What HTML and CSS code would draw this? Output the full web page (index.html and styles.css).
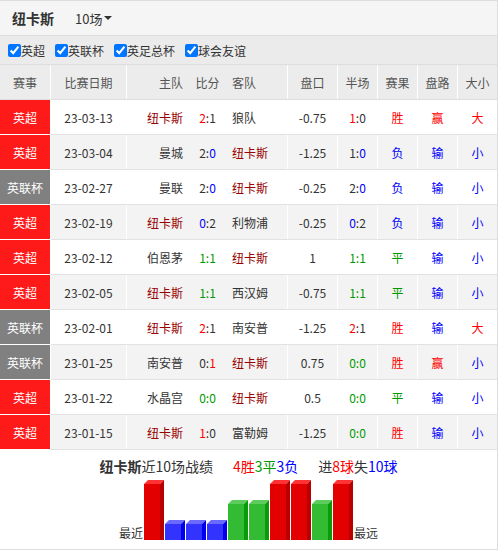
FILE: index.html
```html
<!DOCTYPE html>
<html lang="zh">
<head>
<meta charset="utf-8">
<link rel="stylesheet" href="styles.css">
</head>
<body>
<div class="panel">
  <div class="topbar">
    <span class="team-title">纽卡斯</span>
    <span class="count">10场<i class="caret"></i></span>
  </div>
  <div class="filters">
    <label><input type="checkbox" checked>英超</label>
    <label><input type="checkbox" checked>英联杯</label>
    <label><input type="checkbox" checked>英足总杯</label>
    <label><input type="checkbox" checked>球会友谊</label>
  </div>
  <div class="table">
    <div class="row head">
      <div class="c lg">赛事</div>
      <div class="c dt">比赛日期</div>
      <div class="c home">主队</div>
      <div class="c score">比分</div>
      <div class="c away">客队</div>
      <div class="c hc">盘口</div>
      <div class="c ht">半场</div>
      <div class="c res">赛果</div>
      <div class="c pl">盘路</div>
      <div class="c ou">大小</div>
    </div>
    <div class="row">
      <div class="c lg epl">英超</div><div class="c dt">23-03-13</div>
      <div class="c home nc">纽卡斯</div><div class="c score"><span class="r">2</span>:1</div><div class="c away">狼队</div>
      <div class="c hc">-0.75</div><div class="c ht"><span class="r">1</span>:0</div>
      <div class="c res r">胜</div><div class="c pl r">赢</div><div class="c ou r">大</div>
    </div>
    <div class="row alt">
      <div class="c lg epl">英超</div><div class="c dt">23-03-04</div>
      <div class="c home">曼城</div><div class="c score">2:<span class="b">0</span></div><div class="c away nc">纽卡斯</div>
      <div class="c hc">-1.25</div><div class="c ht">1:<span class="b">0</span></div>
      <div class="c res b">负</div><div class="c pl b">输</div><div class="c ou b">小</div>
    </div>
    <div class="row">
      <div class="c lg cup">英联杯</div><div class="c dt">23-02-27</div>
      <div class="c home">曼联</div><div class="c score">2:<span class="b">0</span></div><div class="c away nc">纽卡斯</div>
      <div class="c hc">-0.25</div><div class="c ht">2:<span class="b">0</span></div>
      <div class="c res b">负</div><div class="c pl b">输</div><div class="c ou b">小</div>
    </div>
    <div class="row alt">
      <div class="c lg epl">英超</div><div class="c dt">23-02-19</div>
      <div class="c home nc">纽卡斯</div><div class="c score"><span class="b">0</span>:2</div><div class="c away">利物浦</div>
      <div class="c hc">-0.25</div><div class="c ht"><span class="b">0</span>:2</div>
      <div class="c res b">负</div><div class="c pl b">输</div><div class="c ou b">小</div>
    </div>
    <div class="row">
      <div class="c lg epl">英超</div><div class="c dt">23-02-12</div>
      <div class="c home">伯恩茅</div><div class="c score g">1:1</div><div class="c away nc">纽卡斯</div>
      <div class="c hc">1</div><div class="c ht g">1:1</div>
      <div class="c res g">平</div><div class="c pl b">输</div><div class="c ou b">小</div>
    </div>
    <div class="row alt">
      <div class="c lg epl">英超</div><div class="c dt">23-02-05</div>
      <div class="c home nc">纽卡斯</div><div class="c score g">1:1</div><div class="c away">西汉姆</div>
      <div class="c hc">-0.75</div><div class="c ht g">1:1</div>
      <div class="c res g">平</div><div class="c pl b">输</div><div class="c ou b">小</div>
    </div>
    <div class="row">
      <div class="c lg cup">英联杯</div><div class="c dt">23-02-01</div>
      <div class="c home nc">纽卡斯</div><div class="c score"><span class="r">2</span>:1</div><div class="c away">南安普</div>
      <div class="c hc">-1.25</div><div class="c ht"><span class="r">2</span>:1</div>
      <div class="c res r">胜</div><div class="c pl b">输</div><div class="c ou r">大</div>
    </div>
    <div class="row alt">
      <div class="c lg cup">英联杯</div><div class="c dt">23-01-25</div>
      <div class="c home">南安普</div><div class="c score">0:<span class="r">1</span></div><div class="c away nc">纽卡斯</div>
      <div class="c hc">0.75</div><div class="c ht g">0:0</div>
      <div class="c res r">胜</div><div class="c pl r">赢</div><div class="c ou b">小</div>
    </div>
    <div class="row">
      <div class="c lg epl">英超</div><div class="c dt">23-01-22</div>
      <div class="c home">水晶宫</div><div class="c score g">0:0</div><div class="c away nc">纽卡斯</div>
      <div class="c hc">0.5</div><div class="c ht g">0:0</div>
      <div class="c res g">平</div><div class="c pl b">输</div><div class="c ou b">小</div>
    </div>
    <div class="row alt">
      <div class="c lg epl">英超</div><div class="c dt">23-01-15</div>
      <div class="c home nc">纽卡斯</div><div class="c score"><span class="r">1</span>:0</div><div class="c away">富勒姆</div>
      <div class="c hc">-1.25</div><div class="c ht g">0:0</div>
      <div class="c res r">胜</div><div class="c pl b">输</div><div class="c ou b">小</div>
    </div>
  </div>
  <div class="chart">
    <div class="summary">
      <span><b>纽卡斯</b>近10场战绩</span>
      <span><span class="r">4胜</span><span class="g">3平</span><span class="b">3负</span></span>
      <span>进<span class="r">8球</span>失<span class="b">10球</span></span>
    </div>
    <div class="bars">
      <span class="edge">最近</span>
      <svg class="bar win" width="20" height="60" viewBox="0 0 20 60"><polygon class="tp" points="0,4 4,0 20,0 16,4"/><polygon class="sd" points="16,4 20,0 20,60 16,60"/><rect class="fr" x="0" y="4" width="16" height="56"/></svg>
      <svg class="bar loss" width="20" height="20" viewBox="0 0 20 20"><polygon class="tp" points="0,4 4,0 20,0 16,4"/><polygon class="sd" points="16,4 20,0 20,20 16,20"/><rect class="fr" x="0" y="4" width="16" height="16"/></svg>
      <svg class="bar loss" width="20" height="20" viewBox="0 0 20 20"><polygon class="tp" points="0,4 4,0 20,0 16,4"/><polygon class="sd" points="16,4 20,0 20,20 16,20"/><rect class="fr" x="0" y="4" width="16" height="16"/></svg>
      <svg class="bar loss" width="20" height="20" viewBox="0 0 20 20"><polygon class="tp" points="0,4 4,0 20,0 16,4"/><polygon class="sd" points="16,4 20,0 20,20 16,20"/><rect class="fr" x="0" y="4" width="16" height="16"/></svg>
      <svg class="bar draw" width="20" height="40" viewBox="0 0 20 40"><polygon class="tp" points="0,4 4,0 20,0 16,4"/><polygon class="sd" points="16,4 20,0 20,40 16,40"/><rect class="fr" x="0" y="4" width="16" height="36"/></svg>
      <svg class="bar draw" width="20" height="40" viewBox="0 0 20 40"><polygon class="tp" points="0,4 4,0 20,0 16,4"/><polygon class="sd" points="16,4 20,0 20,40 16,40"/><rect class="fr" x="0" y="4" width="16" height="36"/></svg>
      <svg class="bar win" width="20" height="60" viewBox="0 0 20 60"><polygon class="tp" points="0,4 4,0 20,0 16,4"/><polygon class="sd" points="16,4 20,0 20,60 16,60"/><rect class="fr" x="0" y="4" width="16" height="56"/></svg>
      <svg class="bar win" width="20" height="60" viewBox="0 0 20 60"><polygon class="tp" points="0,4 4,0 20,0 16,4"/><polygon class="sd" points="16,4 20,0 20,60 16,60"/><rect class="fr" x="0" y="4" width="16" height="56"/></svg>
      <svg class="bar draw" width="20" height="40" viewBox="0 0 20 40"><polygon class="tp" points="0,4 4,0 20,0 16,4"/><polygon class="sd" points="16,4 20,0 20,40 16,40"/><rect class="fr" x="0" y="4" width="16" height="36"/></svg>
      <svg class="bar win" width="20" height="60" viewBox="0 0 20 60"><polygon class="tp" points="0,4 4,0 20,0 16,4"/><polygon class="sd" points="16,4 20,0 20,60 16,60"/><rect class="fr" x="0" y="4" width="16" height="56"/></svg>
      <span class="edge">最远</span>
    </div>
  </div>
</div>
</body>
</html>
```
FILE: styles.css
```css
* { box-sizing: border-box; }
html, body { margin: 0; padding: 0; background: #fff; }
body {
  font-family: "Noto Sans CJK SC", "Noto Sans", sans-serif;
  font-size: 12px;
  color: #333;
}
.panel {
  width: 498px;
  height: 550px;
  border-top: 1px solid #ddd;
  border-right: 1px solid #ddd;
  border-bottom: 1px solid #ddd;
}
.topbar {
  height: 35px;
  background: #f5f5f5;
  border-bottom: 1px solid #ddd;
  display: flex;
  align-items: center;
  padding-left: 12px;
}
.team-title { font-weight: bold; font-size: 14px; width: 63px; }
.count { font-size: 13px; display: inline-flex; align-items: center; }
.caret {
  display: inline-block;
  margin-left: 2px;
  width: 0; height: 0;
  border-left: 4px solid transparent;
  border-right: 4px solid transparent;
  border-top: 4px solid #333;
}
.filters {
  height: 29px;
  background: #ebebeb;
  border-bottom: 1px solid #ddd;
  display: flex;
  align-items: center;
  padding-left: 8px;
  font-size: 12px;
}
.filters label { display: inline-flex; align-items: center; margin-right: 10px; }
.filters input { margin: 0 0 0 0; width: 13px; height: 13px; }
.row {
  display: grid;
  grid-template-columns: 51px 76px 63px 35px 63px 50px 40px 40px 40px 39px;
  height: 35px;
  border-bottom: 1px solid #e2e2e2;
  background: #fff;
}
.row.alt { background: #f3f3f3; }
.row.head { background: #ececec; color: #555; border-bottom-color: #ddd; }
.c {
  display: flex;
  align-items: center;
  justify-content: center;
  white-space: nowrap;
}
.lg, .dt, .away, .hc, .ht, .res, .pl { border-right: 1px solid #fff; }
.home { justify-content: flex-end; padding-right: 7px; }
.away { justify-content: flex-start; padding-left: 7px; }
.lg { color: #fff; margin-bottom: -1px; border-bottom: 1px solid #fff; }
.head .lg { color: #555; margin-bottom: 0; border-bottom: 0; }
.epl { background: #ff1a1a; }
.cup { background: #808080; }
.nc { color: #990000; }
.r { color: #ff0000; }
.b { color: #0000ff; }
.g { color: #009900; }
.chart {
  height: 99px;
  padding-top: 7px;
}
.summary {
  display: flex;
  justify-content: center;
  gap: 20px;
  font-size: 14px;
  line-height: 18px;
  height: 18px;
}
.summary b { font-weight: bold; }
.bars {
  margin-top: 5px;
  height: 60px;
  display: flex;
  justify-content: center;
  align-items: flex-end;
  gap: 1px;
}
.edge { font-size: 12px; line-height: 14px; color: #333; }
.bar { display: block; }
.win .fr { fill: #e30000; }
.win .tp { fill: #ff3333; }
.win .sd { fill: #b80000; }
.loss .fr { fill: #3333ff; }
.loss .tp { fill: #6a6aff; }
.loss .sd { fill: #0000ee; }
.draw .fr { fill: #33bb33; }
.draw .tp { fill: #5ccc5c; }
.draw .sd { fill: #0a9a0a; }
```
